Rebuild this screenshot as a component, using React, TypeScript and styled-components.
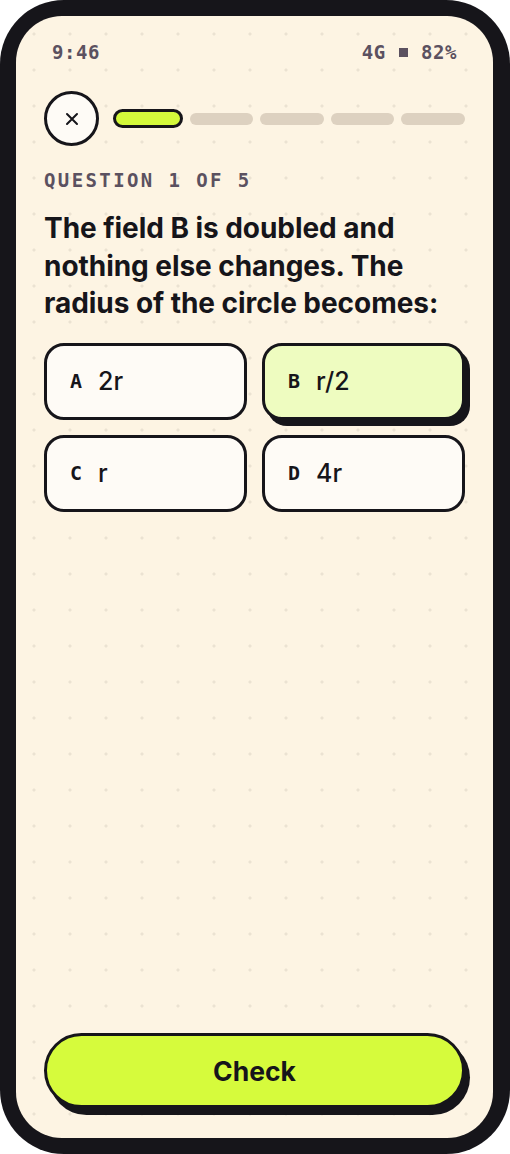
import React from "react";
import styled, { createGlobalStyle } from "styled-components";

const Global = createGlobalStyle`
  html, body { margin: 0; padding: 0; background: #ffffff; }
  * { box-sizing: border-box; }
`;

const INK = "#16151a";
const MONO = `"DejaVu Sans Mono", "Liberation Mono", monospace`;
const SANS = `Inter, "Noto Sans", "Liberation Sans", sans-serif`;

const Frame = styled.div`
  width: 510px;
  height: 1154px;
  background: ${INK};
  border-radius: 64px;
  padding: 16px 17px 16px 16px;
`;

const Screen = styled.div`
  height: 100%;
  border-radius: 46px;
  background-color: #fdf4e3;
  background-image: radial-gradient(circle, #ebe2d2 1.3px, transparent 1.8px);
  background-size: 36px 36px;
  background-position: 0 0;
  padding: 0 28px 30px;
  display: flex;
  flex-direction: column;
`;

const StatusBar = styled.div`
  display: flex;
  justify-content: space-between;
  align-items: center;
  height: 24px;
  margin-top: 24px;
  padding: 0 8px;
  font-family: ${MONO};
  font-weight: 700;
  font-size: 19px;
  letter-spacing: 0.6px;
  color: #5b5160;
`;

const Signal = styled.span`
  display: flex;
  align-items: center;
  gap: 13px;
`;

const Square = styled.span`
  width: 9px;
  height: 9px;
  background: #5b5160;
  display: inline-block;
`;

const TopRow = styled.div`
  display: flex;
  align-items: center;
  gap: 14px;
  margin-top: 27px;
`;

const CloseButton = styled.button`
  width: 55px;
  height: 55px;
  flex: 0 0 55px;
  border-radius: 50%;
  border: 3px solid ${INK};
  background: #fefbf6;
  display: flex;
  align-items: center;
  justify-content: center;
  padding: 0;
`;

const Progress = styled.div`
  flex: 1;
  display: flex;
  align-items: center;
  gap: 7px;
`;

const Segment = styled.div<{ $active?: boolean }>`
  flex: 1;
  height: ${(p) => (p.$active ? "19px" : "12px")};
  border-radius: 10px;
  background: ${(p) => (p.$active ? "#d4f93b" : "#ddd1c0")};
  border: ${(p) => (p.$active ? `3px solid ${INK}` : "none")};
`;

const Label = styled.div`
  margin-top: 22px;
  font-family: ${MONO};
  font-weight: 700;
  font-size: 19px;
  letter-spacing: 2.4px;
  color: #5b5160;
  line-height: 24px;
`;

const Question = styled.h1`
  margin: 18px 0 0;
  font-family: ${SANS};
  font-weight: 700;
  font-size: 28px;
  line-height: 37.5px;
  letter-spacing: -0.05px;
  color: ${INK};
`;

const Options = styled.div`
  display: grid;
  grid-template-columns: 1fr 1fr;
  gap: 15px 15px;
  margin-top: 20px;
`;

const Option = styled.button<{ $selected?: boolean }>`
  height: 77px;
  border: 3px solid ${INK};
  border-radius: 20px;
  background: ${(p) => (p.$selected ? "#eefcc0" : "#fefbf6")};
  box-shadow: ${(p) => (p.$selected ? `5px 6px 0 ${INK}` : "none")};
  display: flex;
  align-items: center;
  gap: 16px;
  padding: 0 0 0 23px;
  text-align: left;
  color: ${INK};
`;

const OptLetter = styled.span`
  font-family: ${MONO};
  font-weight: 700;
  font-size: 20px;
`;

const OptValue = styled.span`
  font-family: ${SANS};
  font-weight: 500;
  font-size: 25px;
`;

const Spacer = styled.div`
  flex: 1;
`;

const CheckButton = styled.button`
  height: 75px;
  border: 3px solid ${INK};
  border-radius: 40px;
  background: #d6fb3c;
  box-shadow: 5px 7px 0 ${INK};
  font-family: ${SANS};
  font-weight: 700;
  font-size: 26.5px;
  color: ${INK};
`;

const options = [
  { letter: "A", value: "2r" },
  { letter: "B", value: "r/2", selected: true },
  { letter: "C", value: "r" },
  { letter: "D", value: "4r" },
];

export default function App() {
  return (
    <>
      <Global />
      <Frame>
        <Screen>
          <StatusBar>
            <span>9:46</span>
            <Signal>
              <span>4G</span>
              <Square />
              <span>82%</span>
            </Signal>
          </StatusBar>
          <TopRow>
            <CloseButton aria-label="Close">
              <svg width="14" height="14" viewBox="0 0 14 14">
                <path d="M2 2 L12 12 M12 2 L2 12" stroke={INK} strokeWidth="2" strokeLinecap="round" />
              </svg>
            </CloseButton>
            <Progress>
              <Segment $active />
              <Segment />
              <Segment />
              <Segment />
              <Segment />
            </Progress>
          </TopRow>
          <Label>QUESTION 1 OF 5</Label>
          <Question>
            The field B is doubled and nothing else changes. The radius of the circle becomes:
          </Question>
          <Options>
            {options.map((o) => (
              <Option key={o.letter} $selected={o.selected}>
                <OptLetter>{o.letter}</OptLetter>
                <OptValue>{o.value}</OptValue>
              </Option>
            ))}
          </Options>
          <Spacer />
          <CheckButton>Check</CheckButton>
        </Screen>
      </Frame>
    </>
  );
}
